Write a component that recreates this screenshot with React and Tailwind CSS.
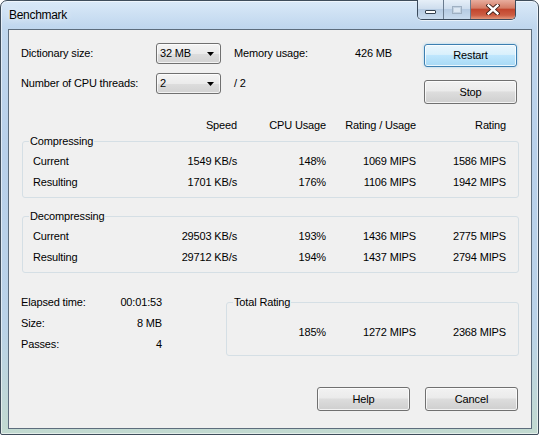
import React from 'react';

function Combo({ value }) {
  return (
    <div className="flex h-[21px] w-[65px] items-center justify-between rounded-[3px] border border-[#707070] bg-[linear-gradient(180deg,#f4f4f4_0%,#ebebeb_50%,#dddddd_51%,#d2d2d2_100%)] pl-[3px] pr-[6px] shadow-[inset_0_0_0_1px_rgba(255,255,255,0.7)]">
      <span>{value}</span>
      <svg width="7" height="4" viewBox="0 0 7 4">
        <path d="M0 0 L7 0 L3.5 4 Z" fill="#000" />
      </svg>
    </div>
  );
}

function Button({ children, primary }) {
  return (
    <div
      className={
        primary
          ? 'flex h-[23px] w-[93px] items-center justify-center rounded-[3px] border border-[#3c7fb1] bg-[linear-gradient(180deg,#eaf6fd_0%,#d9f0fc_45%,#bee6fd_50%,#a7d9f5_100%)] shadow-[inset_0_0_0_1px_rgba(255,255,255,0.75),0_0_3px_rgba(110,190,235,0.6)]'
          : 'flex h-[24px] w-[93px] items-center justify-center rounded-[3px] border border-[#707070] bg-[linear-gradient(180deg,#f2f2f2_0%,#ebebeb_45%,#dddddd_50%,#cfcfcf_100%)] shadow-[inset_0_0_0_1px_rgba(255,255,255,0.75)]'
      }
    >
      {children}
    </div>
  );
}

function Row({ label, speed, cpu, ru, rating }) {
  return (
    <div className="flex h-[21px] items-center">
      <div className="w-[114px]">{label}</div>
      <div className="w-[90px] text-right">{speed}</div>
      <div className="w-[89px] text-right">{cpu}</div>
      <div className="w-[90px] text-right">{ru}</div>
      <div className="w-[90px] text-right">{rating}</div>
    </div>
  );
}

function Group({ title, rows }) {
  return (
    <fieldset className="ml-[13px] w-[497px] rounded-[3px] border border-[#d5dfe5] pb-[4px] pl-[10px] pt-[3px]">
      <legend className="-ml-[4px] px-[1px] leading-[14px]">{title}</legend>
      {rows.map((r) => (
        <Row key={r.label} {...r} />
      ))}
    </fieldset>
  );
}

export default function App() {
  return (
    <div className="h-[435px] w-[539px] font-['Liberation_Sans',Arial,sans-serif] text-[11px] tracking-[-0.15px] text-black">
      <div className="h-[435px] w-[539px] rounded-t-[7px] rounded-b-[2px] border border-[#3f4d5b] bg-[linear-gradient(180deg,#dae9f8_0%,#c0d7ee_6%,#b8d0ea_35%,#bad2e8_75%,#c2dad0_100%)] shadow-[inset_0_0_0_1px_rgba(255,255,255,0.55)]">
        <div className="flex h-[28px] items-start justify-between">
          <div className="pl-[8px] pt-[6px] text-[12px] leading-[16px] tracking-[-0.3px] [text-shadow:0_0_7px_rgba(255,255,255,0.95)]">
            Benchmark
          </div>
          <div className="mr-[22px] -mt-[1px] flex h-[20px] overflow-hidden rounded-b-[5px] border border-t-0 border-[#3b4a5c] shadow-[0_1px_0_rgba(255,255,255,0.6)]">
            <div className="flex w-[26px] items-center justify-center border-r border-[#6a7b8e] bg-[linear-gradient(180deg,#e6eff8_0%,#cfdeee_45%,#b6cbe2_50%,#c9dbee_100%)]">
              <div className="mt-[5px] h-[4px] w-[11px] rounded-[1px] border border-[#34404e] bg-white" />
            </div>
            <div className="flex w-[27px] items-center justify-center border-r border-[#6a7b8e] bg-[linear-gradient(180deg,#e6eff8_0%,#cfdeee_45%,#b6cbe2_50%,#c9dbee_100%)]">
              <div className="h-[8px] w-[10px] border border-[#9fb0c2] bg-[#dce7f2] shadow-[inset_0_0_0_1px_#c2d1e1]" />
            </div>
            <div className="flex w-[44px] items-center justify-center bg-[linear-gradient(180deg,#e8ad9e_0%,#d47c66_42%,#c2462e_50%,#cc5d43_80%,#e2977c_100%)]">
              <svg width="14" height="11" viewBox="0 0 14 11">
                <path d="M2.5 1.5 L11.5 9.5 M11.5 1.5 L2.5 9.5" stroke="#3a1a14" strokeWidth="4.2" strokeLinecap="square" />
                <path d="M2.5 1.5 L11.5 9.5 M11.5 1.5 L2.5 9.5" stroke="#ffffff" strokeWidth="2.4" strokeLinecap="square" />
              </svg>
            </div>
          </div>
        </div>

        <div className="ml-[7px] h-[400px] w-[524px] border border-[#5d6d7d] bg-[#f0f0f0]">
          <div className="flex pl-[12px] pt-[13px]">
            <div className="w-[403px]">
              <div className="flex h-[21px] items-center">
                <div className="w-[135px]">Dictionary size:</div>
                <Combo value="32 MB" />
                <div className="ml-[13px] w-[121px]">Memory usage:</div>
                <div>426 MB</div>
              </div>
              <div className="mt-[9px] flex h-[21px] items-center">
                <div className="w-[135px]">Number of CPU threads:</div>
                <Combo value="2" />
                <div className="ml-[13px]">/ 2</div>
              </div>
            </div>
            <div className="mt-[1px] flex flex-col gap-[13px]">
              <Button primary>Restart</Button>
              <Button>Stop</Button>
            </div>
          </div>

          <div className="mt-[14px] flex h-[14px] items-center pl-[24px]">
            <div className="w-[114px]" />
            <div className="w-[90px] text-right">Speed</div>
            <div className="w-[89px] text-right">CPU Usage</div>
            <div className="w-[90px] text-right">Rating / Usage</div>
            <div className="w-[90px] text-right">Rating</div>
          </div>

          <div className="mt-[2px]">
            <Group
              title="Compressing"
              rows={[
                { label: 'Current', speed: '1549 KB/s', cpu: '148%', ru: '1069 MIPS', rating: '1586 MIPS' },
                { label: 'Resulting', speed: '1701 KB/s', cpu: '176%', ru: '1106 MIPS', rating: '1942 MIPS' },
              ]}
            />
          </div>
          <div className="mt-[11px]">
            <Group
              title="Decompressing"
              rows={[
                { label: 'Current', speed: '29503 KB/s', cpu: '193%', ru: '1436 MIPS', rating: '2775 MIPS' },
                { label: 'Resulting', speed: '29712 KB/s', cpu: '194%', ru: '1437 MIPS', rating: '2794 MIPS' },
              ]}
            />
          </div>

          <div className="mt-[19px] flex items-start">
            <div className="w-[153px] pl-[12px]">
              <div className="flex h-[21px] items-center justify-between">
                <span>Elapsed time:</span>
                <span>00:01:53</span>
              </div>
              <div className="flex h-[21px] items-center justify-between">
                <span>Size:</span>
                <span>8 MB</span>
              </div>
              <div className="flex h-[21px] items-center justify-between">
                <span>Passes:</span>
                <span>4</span>
              </div>
            </div>
            <fieldset className="ml-[64px] mt-[3px] w-[293px] rounded-[3px] border border-[#d5dfe5] pb-[12px] pl-[10px] pt-[13px]">
              <legend className="-ml-[4px] px-[1px] leading-[14px]">Total Rating</legend>
              <div className="flex h-[21px] items-center">
                <div className="w-[89px] text-right">185%</div>
                <div className="w-[90px] text-right">1272 MIPS</div>
                <div className="w-[90px] text-right">2368 MIPS</div>
              </div>
            </fieldset>
          </div>

          <div className="mt-[31px] flex justify-end gap-[15px] pr-[13px]">
            <Button>Help</Button>
            <Button>Cancel</Button>
          </div>
        </div>
      </div>
    </div>
  );
}
